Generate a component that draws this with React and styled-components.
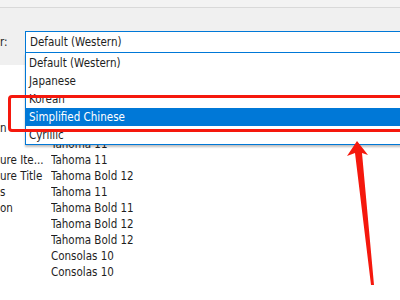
import React from "react";
import styled, { createGlobalStyle } from "styled-components";

const GlobalStyle = createGlobalStyle`
  html, body {
    margin: 0;
    padding: 0;
    background: #ffffff;
  }
  body {
    font-family: Tahoma, "DejaVu Sans Condensed", "DejaVu Sans", sans-serif;
    font-size: 11.5px;
    color: #1e1e1e;
  }
`;

const Screen = styled.div`
  position: relative;
  width: 400px;
  height: 300px;
  overflow: hidden;
  background: #ffffff;
`;

const Header = styled.div`
  height: 65px;
  background: #f0f0f0;
  display: flex;
  flex-direction: column;
`;

const TopStrip = styled.div`
  height: 7px;
  background: #f3f3f3;
  border-bottom: 1px solid #d9d9d9;
`;

const FieldRow = styled.div`
  display: flex;
  align-items: center;
  gap: 15px;
  margin-top: 23px;
`;

const FieldLabel = styled.span`
  width: 10px;
  color: #1e1e1e;
`;

const Combo = styled.div`
  flex: 1;
  height: 22px;
  box-sizing: border-box;
  border: 1px solid #0078d7;
  border-right: none;
  background: #ffffff;
  display: flex;
  align-items: center;
  padding-left: 4px;
`;

const Table = styled.div`
  display: flex;
  flex-direction: column;
  padding-top: 55px;
`;

const Row = styled.div`
  display: grid;
  grid-template-columns: 51px 1fr;
  height: 16px;
  align-items: center;
  white-space: nowrap;
`;

const Cell = styled.span`
  overflow: hidden;
`;

const ListBox = styled.div`
  position: absolute;
  left: 25px;
  top: 53px;
  right: -5px;
  background: #ffffff;
  border-left: 1px solid #0078d7;
  border-bottom: 1px solid #0078d7;
  box-shadow: 0 2px 2px rgba(0, 0, 0, 0.25);
  display: flex;
  flex-direction: column;
  padding-top: 1px;
`;

const Item = styled.div`
  height: 18px;
  display: flex;
  align-items: center;
  padding-left: 3px;
  background: ${({ $selected }) => ($selected ? "#0078d7" : "transparent")};
  color: ${({ $selected }) => ($selected ? "#ffffff" : "#1e1e1e")};
`;

const Highlight = styled.div`
  position: absolute;
  left: 8px;
  top: 95px;
  width: 420px;
  height: 37px;
  box-sizing: border-box;
  border: 3px solid #f5180d;
  border-radius: 4px;
  pointer-events: none;
`;

const ArrowLayer = styled.svg`
  position: absolute;
  left: 0;
  top: 0;
  pointer-events: none;
`;

const rows = [
  ["n", ""],
  ["", "Tahoma 11"],
  ["ure Ite...", "Tahoma 11"],
  ["ure Title", "Tahoma Bold 12"],
  ["s", "Tahoma 11"],
  ["on", "Tahoma Bold 11"],
  ["", "Tahoma Bold 12"],
  ["", "Tahoma Bold 12"],
  ["", "Consolas 10"],
  ["", "Consolas 10"],
];

const options = [
  "Default (Western)",
  "Japanese",
  "Korean",
  "Simplified Chinese",
  "Cyrillic",
];

const App = () => {
  return (
    <Screen>
      <GlobalStyle />
      <Header>
        <TopStrip />
        <FieldRow>
          <FieldLabel>r:</FieldLabel>
          <Combo>Default (Western)</Combo>
        </FieldRow>
      </Header>
      <Table>
        {rows.map(([name, font], i) => (
          <Row key={i}>
            <Cell>{name}</Cell>
            <Cell>{font}</Cell>
          </Row>
        ))}
      </Table>
      <ListBox>
        {options.map((opt) => (
          <Item key={opt} $selected={opt === "Simplified Chinese"}>
            {opt}
          </Item>
        ))}
      </ListBox>
      <Highlight />
      <ArrowLayer width="400" height="300" viewBox="0 0 400 300">
        <polygon
          points="357,141 368,155 362,153 374,285 371,285 355,153 347,156"
          fill="#f5180d"
        />
      </ArrowLayer>
    </Screen>
  );
};

export default App;
